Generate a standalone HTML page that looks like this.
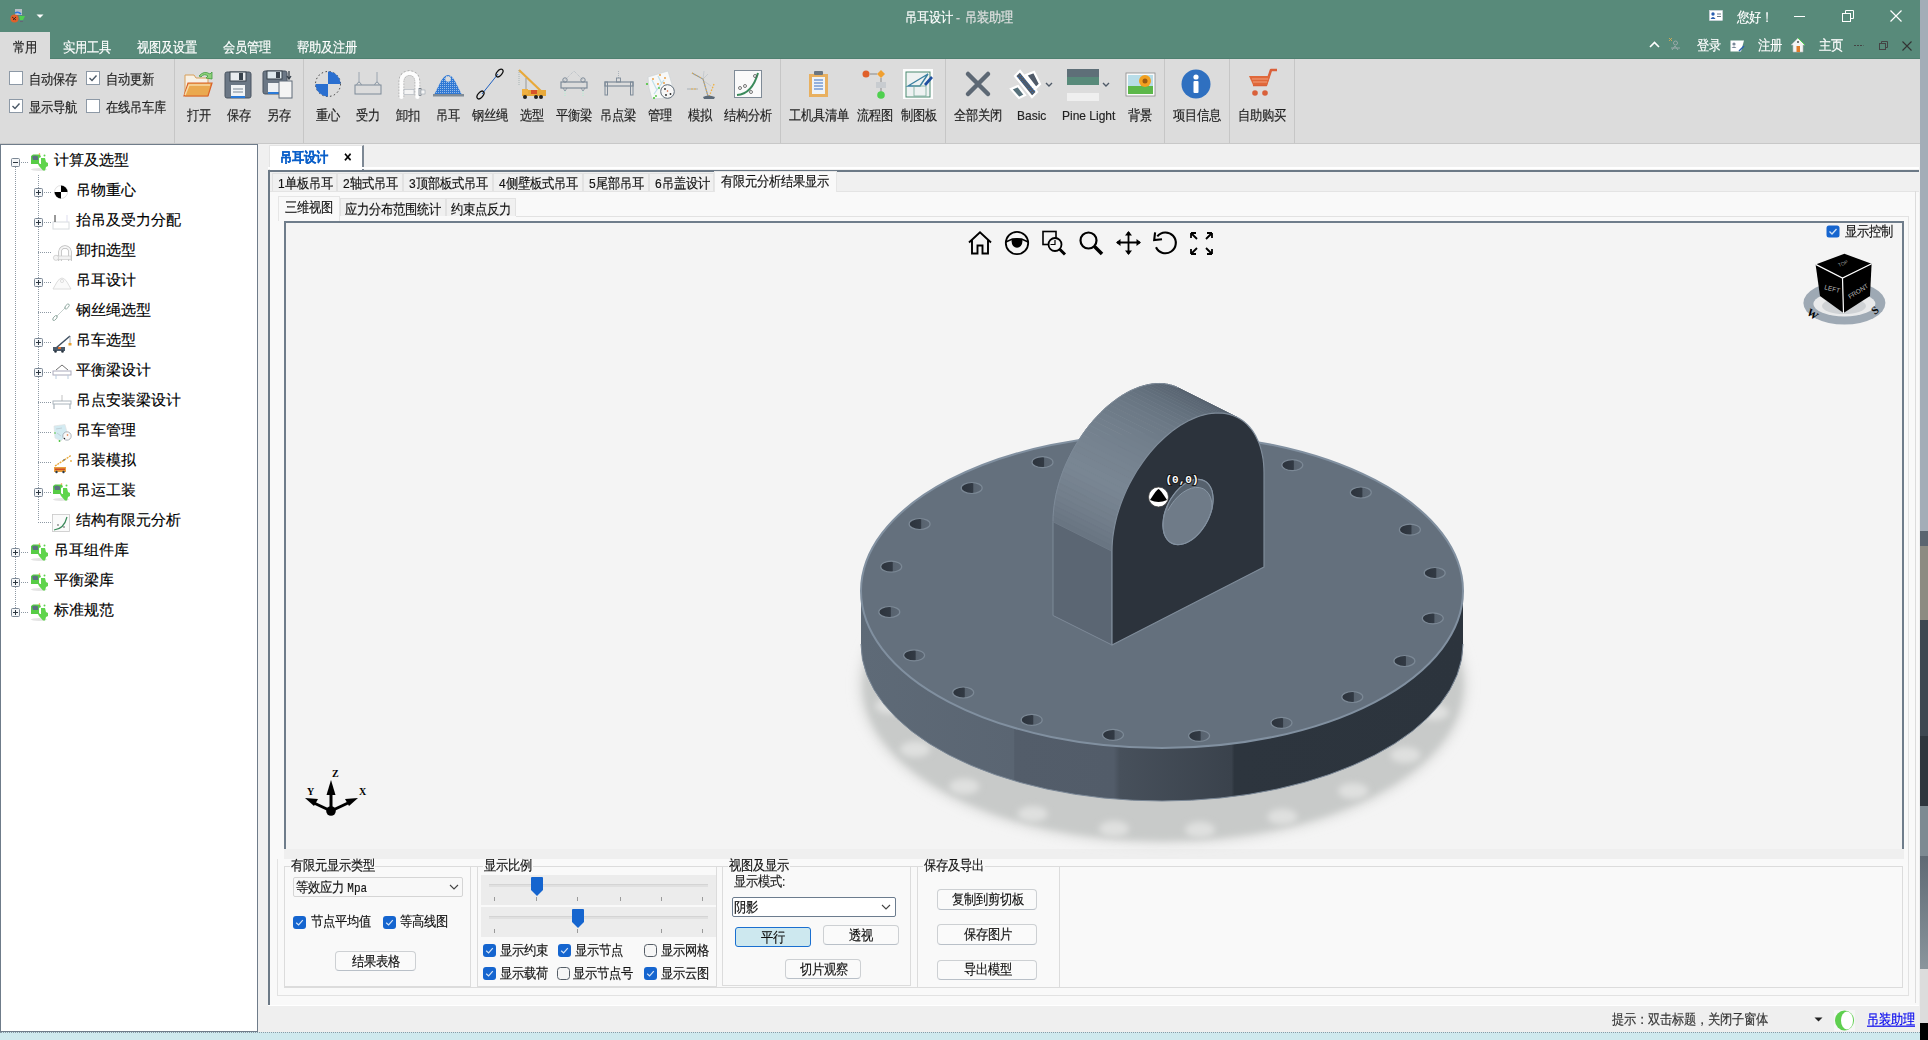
<!DOCTYPE html><html><head><meta charset="utf-8"><style>
*{margin:0;padding:0;box-sizing:border-box}
html,body{width:1928px;height:1040px;overflow:hidden;background:#f0f0f0;font-family:"Liberation Sans",sans-serif;font-size:12px}
.t{position:absolute;white-space:nowrap;line-height:1;transform-origin:50% 55%;-webkit-text-stroke:0.15px currentColor}
.s{transform:scaleY(1.14)}
.r{position:absolute}
svg{position:absolute;overflow:visible}
</style></head><body><div class="r" style="left:1920px;top:0px;width:8px;height:1040px;background:linear-gradient(to bottom,#a3adb7 0,#a3adb7 531px,#5a6570 531px,#5a6570 546px,#8c8b82 546px,#8c8b82 620px,#3f4852 620px,#3f4852 736px,#2f363e 736px,#2f363e 806px,#7d8a92 806px,#7d8a92 856px,#5f6a74 856px,#8a959c 969px,#dcdcdc 969px,#dcdcdc 1023px,#000 1023px,#000 1040px)"></div>
<div class="r" style="left:0px;top:0px;width:1920px;height:59px;background:#588a7a"></div>
<div class="r" style="left:0px;top:58px;width:1920px;height:1px;background:#4f8070"></div>
<div class="r" style="left:0px;top:32px;width:50px;height:27px;background:#dcdcdc"></div>
<div class="t s" style="left:13px;top:42px;font-size:12px;color:#222;">常用</div>
<div class="t s" style="left:63px;top:42px;font-size:12px;color:#fff;">实用工具</div>
<div class="t s" style="left:137px;top:42px;font-size:12px;color:#fff;">视图及设置</div>
<div class="t s" style="left:223px;top:42px;font-size:12px;color:#fff;">会员管理</div>
<div class="t s" style="left:297px;top:42px;font-size:12px;color:#fff;">帮助及注册</div>
<div class="t s" style="left:905px;top:12px;font-size:12px;color:#fff;">吊耳设计</div>
<div class="t s" style="left:956px;top:12px;font-size:12px;color:#ddd;">-</div>
<div class="t s" style="left:965px;top:12px;font-size:12px;color:#e2e2e2;">吊装助理</div>
<div class="t s" style="left:1737px;top:12px;font-size:12px;color:#fff;">您好！</div>
<div class="t s" style="left:1697px;top:40px;font-size:12px;color:#fff;">登录</div>
<div class="t s" style="left:1758px;top:40px;font-size:12px;color:#fff;">注册</div>
<div class="t s" style="left:1819px;top:40px;font-size:12px;color:#fff;">主页</div>
<div class="r" style="left:0px;top:59px;width:1920px;height:84px;background:#dcdcdc"></div>
<div class="r" style="left:0px;top:143px;width:1920px;height:1px;background:#c8c8c8"></div>
<div class="r" style="left:0px;top:144px;width:258px;height:888px;background:#fff;border:1px solid #6f7c8a"></div>
<div class="r" style="left:269px;top:145px;width:95px;height:25px;background:#fff;border-top:1px solid #e4e4e4;border-left:1px solid #e4e4e4;border-right:2px solid #7d8894"></div>
<div class="t s" style="left:280px;top:152px;font-size:12px;color:#0a5fc9;font-weight:bold">吊耳设计</div>
<div class="t s" style="left:344px;top:150px;font-size:13px;color:#000;font-weight:bold">×</div>
<div class="r" style="left:268px;top:170px;width:1651px;height:835px;background:#f9f9f9;border-top:2px solid #6c7986;border-left:2px solid #6c7986"></div>
<div class="r" style="left:268px;top:1005px;width:1651px;height:1px;background:#fff"></div>
<div class="r" style="left:258px;top:1006px;width:1662px;height:26px;background:#efefef"></div>
<div class="r" style="left:0px;top:1032px;width:1920px;height:8px;background:#cfe9ee;border-top:1px dotted #8a9aa6"></div>
<div class="r" style="left:284px;top:221px;width:1620px;height:628px;background:#f4f4f4;border-top:2px solid #6f7d8b;border-left:2px solid #6f7d8b;border-right:2px solid #6f7d8b"></div>
<div class="r" style="left:284px;top:849px;width:1620px;height:10px;background:#efefef"></div>
<svg style="left:0;top:0" width="0" height="0"><defs><pattern id="dots" width="2" height="2" patternUnits="userSpaceOnUse"><rect width="1" height="1" fill="#fff"/></pattern></defs></svg>
<div class="r" style="left:174px;top:59px;width:1px;height:84px;background:#c6c6c6"></div>
<div class="r" style="left:303px;top:59px;width:1px;height:84px;background:#c6c6c6"></div>
<div class="r" style="left:780px;top:59px;width:1px;height:84px;background:#c6c6c6"></div>
<div class="r" style="left:945px;top:59px;width:1px;height:84px;background:#c6c6c6"></div>
<div class="r" style="left:1164px;top:59px;width:1px;height:84px;background:#c6c6c6"></div>
<div class="r" style="left:1229px;top:59px;width:1px;height:84px;background:#c6c6c6"></div>
<div class="r" style="left:1294px;top:59px;width:1px;height:84px;background:#c6c6c6"></div>
<div class="r" style="left:9px;top:71px;width:14px;height:14px;background:#fff;border:1px solid #8d99a6"></div>
<div class="t s" style="left:29px;top:74px;font-size:12px;color:#222;">自动保存</div>
<div class="r" style="left:86px;top:71px;width:14px;height:14px;background:#fff;border:1px solid #8d99a6"></div>
<svg style="left:86px;top:71px" width="14" height="14"><path d="M3.5,7 L6,9.5 L10.5,4.5" fill="none" stroke="#4a5866" stroke-width="1.4"/></svg>
<div class="t s" style="left:106px;top:74px;font-size:12px;color:#222;">自动更新</div>
<div class="r" style="left:9px;top:99px;width:14px;height:14px;background:#fff;border:1px solid #8d99a6"></div>
<svg style="left:9px;top:99px" width="14" height="14"><path d="M3.5,7 L6,9.5 L10.5,4.5" fill="none" stroke="#4a5866" stroke-width="1.4"/></svg>
<div class="t s" style="left:29px;top:102px;font-size:12px;color:#222;">显示导航</div>
<div class="r" style="left:86px;top:99px;width:14px;height:14px;background:#fff;border:1px solid #8d99a6"></div>
<div class="t s" style="left:106px;top:102px;font-size:12px;color:#222;">在线吊车库</div>
<svg style="left:182px;top:68px" width="32" height="32" viewBox="0 0 32 32"><path d="M3,7 L12,7 L14,10 L26,10 L26,28 L3,28 Z" fill="#f7f1e6" stroke="#d9a05a" stroke-width="1"/><path d="M2,28 L6,15 L30,15 L26,28 Z" fill="#eaa94f" stroke="#d9622a" stroke-width="1.2"/><path d="M3,27 L7,17 L28,17" fill="none" stroke="#f6d9a6" stroke-width="1.5"/><path d="M17,8 Q22,2 28,6 L30,4 L30,11 L24,10 L26,8 Q22,5 19,9 Z" fill="#8fd07a" stroke="#3f9a3f" stroke-width="0.8"/></svg>
<div class="t s" style="left:187px;top:110px;font-size:12px;color:#222;">打开</div>
<svg style="left:222px;top:68px" width="32" height="32" viewBox="0 0 32 32"><rect x="3" y="4" width="26" height="26" rx="2" fill="#6b7785" stroke="#4a5561" stroke-width="1"/><rect x="8" y="4" width="16" height="9" fill="#e9ecef" stroke="#38424c" stroke-width="1"/><rect x="17" y="5" width="4" height="7" fill="#38424c"/><rect x="9" y="17" width="14" height="13" fill="#f2f4f6"/><path d="M11,21 H21 M11,24 H21" stroke="#7a8896" stroke-width="1"/><rect x="9" y="28" width="14" height="2" fill="#2a7ad8"/></svg>
<div class="t s" style="left:227px;top:110px;font-size:12px;color:#222;">保存</div>
<svg style="left:262px;top:68px" width="32" height="32" viewBox="0 0 32 32"><rect x="1" y="3" width="24" height="23" rx="2" fill="#6b7785" stroke="#4a5561" stroke-width="1"/><rect x="5" y="3" width="15" height="8" fill="#dfe9ee" stroke="#38424c" stroke-width="1"/><rect x="14" y="4" width="4" height="6" fill="#38424c"/><rect x="6" y="15" width="12" height="11" fill="#eef1f4"/><rect x="6" y="24" width="12" height="2" fill="#2a7ad8"/><rect x="17" y="13" width="13" height="17" fill="#f4f4f4" stroke="#5f6b78" stroke-width="1"/><path d="M27,3 V10 M25,8 L27,11 L29,8" fill="none" stroke="#38424c" stroke-width="1.3"/></svg>
<div class="t s" style="left:267px;top:110px;font-size:12px;color:#222;">另存</div>
<svg style="left:312px;top:68px" width="32" height="32" viewBox="0 0 32 32"><circle cx="16" cy="16" r="12.5" fill="none" stroke="#333" stroke-width="1" stroke-dasharray="1.5 2.5"/><path d="M16,16 L16,3.5 A12.5,12.5 0 0 1 28.5,16 Z" fill="#2a6fd0"/><path d="M16,16 L16,28.5 A12.5,12.5 0 0 1 3.5,16 Z" fill="#2a6fd0"/></svg>
<div class="t s" style="left:316px;top:110px;font-size:12px;color:#222;">重心</div>
<svg style="left:352px;top:68px" width="32" height="32" viewBox="0 0 32 32"><rect x="3" y="17" width="26" height="9" fill="none" stroke="#7d8a98" stroke-width="1"/><path d="M7,4 V14 M25,4 V14" stroke="#8a97a4" stroke-width="0.8"/><path d="M4.5,17 Q7,11 9.5,17 M22.5,17 Q25,11 27.5,17" fill="none" stroke="#8a97a4" stroke-width="1"/></svg>
<div class="t s" style="left:356px;top:110px;font-size:12px;color:#222;">受力</div>
<svg style="left:392px;top:68px" width="32" height="32" viewBox="0 0 32 32"><path d="M9.4,29 V13 A8,8 0 0 1 25.4,13 V29" fill="none" stroke="#777" stroke-width="5.6" stroke-dasharray="1.5 1.5" opacity="0.55"/><path d="M9.4,29 V13 A8,8 0 0 1 25.4,13 V29" fill="none" stroke="#fdfdfd" stroke-width="4.2" stroke-linecap="round"/><rect x="12" y="21.5" width="10" height="5" fill="#f4f4f4" stroke="#a8b0b8" stroke-width="0.6"/><rect x="27" y="20.5" width="2" height="7" fill="#eee" stroke="#4a5866" stroke-width="0.6"/><rect x="29" y="22" width="4" height="4" fill="#f4f4f4" stroke="#8a96a2" stroke-width="0.5"/></svg>
<div class="t s" style="left:396px;top:110px;font-size:12px;color:#222;">卸扣</div>
<svg style="left:432px;top:68px" width="32" height="32" viewBox="0 0 32 32"><path d="M2,27 L9,13 Q16,1 23,13 L30,27 Z" fill="#2f78d4"/><path d="M2,27 L9,13 Q16,1 23,13 L30,27 Z" fill="url(#dots)" opacity="0.5"/><circle cx="16" cy="11" r="2.8" fill="#dcdcdc"/><rect x="1" y="26" width="31" height="2.5" fill="#7f8b97"/></svg>
<div class="t s" style="left:436px;top:110px;font-size:12px;color:#222;">吊耳</div>
<svg style="left:474px;top:68px" width="32" height="32" viewBox="0 0 32 32"><path d="M8,26 L24,6" stroke="#1f60c0" stroke-width="1"/><ellipse cx="25.5" cy="5" rx="2.5" ry="4.5" transform="rotate(40 25.5 5)" fill="none" stroke="#111" stroke-width="1.3"/><ellipse cx="6.5" cy="27" rx="2.5" ry="4.5" transform="rotate(40 6.5 27)" fill="none" stroke="#111" stroke-width="1.3"/></svg>
<div class="t s" style="left:472px;top:110px;font-size:12px;color:#222;">钢丝绳</div>
<svg style="left:516px;top:68px" width="32" height="32" viewBox="0 0 32 32"><path d="M3,2 L26,24" stroke="#e8a93a" stroke-width="2.2"/><path d="M3,2 V18" stroke="#9aa" stroke-width="0.8" stroke-dasharray="1 1"/><path d="M10,10 L10,23" stroke="#999" stroke-width="1"/><rect x="6" y="22" width="24" height="6" fill="#e8a93a"/><rect x="6" y="21" width="6" height="5" fill="#f0b040"/><rect x="15" y="22" width="6" height="4" fill="#d8542a"/><circle cx="9" cy="29" r="2" fill="#222"/><circle cx="20" cy="29" r="2" fill="#222"/><circle cx="25" cy="29" r="2" fill="#222"/></svg>
<div class="t s" style="left:520px;top:110px;font-size:12px;color:#222;">选型</div>
<svg style="left:558px;top:68px" width="32" height="32" viewBox="0 0 32 32"><path d="M6,13 L16,3 L26,13" fill="none" stroke="#9aa6b1" stroke-width="0.6" stroke-dasharray="1 1"/><rect x="3" y="14" width="26" height="6" fill="none" stroke="#7d8a98" stroke-width="1.2"/><circle cx="7" cy="12" r="2.2" fill="none" stroke="#7d8a98" stroke-width="1"/><circle cx="25" cy="12" r="2.2" fill="none" stroke="#7d8a98" stroke-width="1"/><path d="M5,20 L7,23 L9,20 M23,20 L25,23 L27,20" fill="none" stroke="#7d8a98" stroke-width="0.8"/><path d="M7,23 V29 M25,23 V29" stroke="#9fc" stroke-width="0.6" stroke-dasharray="1 1"/></svg>
<div class="t s" style="left:556px;top:110px;font-size:12px;color:#222;">平衡梁</div>
<svg style="left:602px;top:68px" width="32" height="32" viewBox="0 0 32 32"><rect x="3" y="14" width="28" height="4" fill="none" stroke="#7d8a98" stroke-width="1.2"/><rect x="3" y="14" width="2.5" height="13" fill="none" stroke="#7d8a98" stroke-width="1"/><rect x="28.5" y="14" width="2.5" height="13" fill="none" stroke="#7d8a98" stroke-width="1"/><rect x="14.5" y="10" width="4" height="4" fill="none" stroke="#7d8a98" stroke-width="0.9"/><path d="M16.5,3 V10" stroke="#8a97a4" stroke-width="0.6" stroke-dasharray="1 1"/></svg>
<div class="t s" style="left:600px;top:110px;font-size:12px;color:#222;">吊点梁</div>
<svg style="left:644px;top:68px" width="32" height="32" viewBox="0 0 32 32"><path d="M4,9 L24,3 L29,20 L22,30 L8,31 L5,20 Z" fill="#f7f8f8" stroke="#c9d0d4" stroke-width="0.6"/><path d="M8,12 L13,22 M10,26 L20,12 M14,8 L18,16" stroke="#bfe0ea" stroke-width="1.2"/><circle cx="9" cy="11" r="0.9" fill="#e8983a"/><circle cx="16" cy="7" r="0.9" fill="#e8983a"/><circle cx="21" cy="10" r="0.9" fill="#e8983a"/><circle cx="14" cy="16" r="0.9" fill="#e8983a"/><circle cx="20" cy="15" r="0.9" fill="#e8983a"/><circle cx="3" cy="16" r="1.1" fill="#4cc43c"/><circle cx="15" cy="20" r="0.9" fill="#4cc43c"/><circle cx="10" cy="30" r="1.1" fill="#4cc43c"/><circle cx="12" cy="28" r="0.9" fill="#4cc43c"/><circle cx="23.5" cy="23.5" r="6.8" fill="#f6f6f6" stroke="#5f6b77" stroke-width="1"/><circle cx="21" cy="21" r="0.9" fill="#222"/><circle cx="26.5" cy="26" r="0.9" fill="#222"/><circle cx="22" cy="27" r="0.9" fill="#222"/><circle cx="23.5" cy="23" r="0.8" fill="#d05a30"/></svg>
<div class="t s" style="left:648px;top:110px;font-size:12px;color:#222;">管理</div>
<svg style="left:684px;top:68px" width="32" height="32" viewBox="0 0 32 32"><path d="M8,5 L19,11 L24,28" fill="none" stroke="#8796a3" stroke-width="1.1"/><path d="M8,5 L19,11 L24,28" fill="none" stroke="#f0b040" stroke-width="1.1" stroke-dasharray="1 2"/><path d="M30,16 L25,29" fill="none" stroke="#f0b040" stroke-width="1.3" stroke-dasharray="1.5 1.5"/><path d="M19,11 L20,3 M19,11 L24,6 M20,13 L27,18" stroke="#b0b8c0" stroke-width="0.5"/><path d="M3,21 H14" stroke="#9aa4ae" stroke-width="0.8"/><circle cx="8" cy="21" r="0.8" fill="#f0b040"/><circle cx="11" cy="21" r="0.8" fill="#f0b040"/><path d="M19,29 Q24,26 31,29 L30,31 L20,31 Z" fill="#5c6a78"/></svg>
<div class="t s" style="left:688px;top:110px;font-size:12px;color:#222;">模拟</div>
<svg style="left:732px;top:68px" width="32" height="32" viewBox="0 0 32 32"><rect x="2.5" y="2.5" width="27" height="27" fill="#fafafa" stroke="#7f8b97" stroke-width="1"/><path d="M5,27 Q20,26 26,5" fill="none" stroke="#3a8a5a" stroke-width="2"/><circle cx="8" cy="20" r="1.5" fill="none" stroke="#555" stroke-width="0.8"/><circle cx="13" cy="18" r="1.5" fill="none" stroke="#555" stroke-width="0.8"/><circle cx="23" cy="8" r="1.5" fill="none" stroke="#555" stroke-width="0.8"/><circle cx="19" cy="24" r="1.5" fill="none" stroke="#555" stroke-width="0.8"/></svg>
<div class="t s" style="left:724px;top:110px;font-size:12px;color:#222;">结构分析</div>
<svg style="left:802px;top:68px" width="32" height="32" viewBox="0 0 32 32"><rect x="7" y="6" width="19" height="23" fill="#e8b060"/><rect x="10" y="9" width="13" height="17" fill="#eef3f8"/><rect x="12" y="3" width="9" height="4" rx="1" fill="#6a7682"/><path d="M12,12 H21 M12,15 H21 M12,18 H21 M12,21 H21" stroke="#3b6fc0" stroke-width="1"/></svg>
<div class="t s" style="left:789px;top:110px;font-size:12px;color:#222;">工机具清单</div>
<svg style="left:858px;top:68px" width="32" height="32" viewBox="0 0 32 32"><circle cx="8" cy="6" r="3.5" fill="#e0602a"/><path d="M12,6 H19" stroke="#888" stroke-width="1"/><path d="M23,2 L27,6 L23,10 L19,6 Z" fill="#f0a030"/><path d="M23,10 V14" stroke="#888" stroke-width="1"/><rect x="18" y="14" width="10" height="6" fill="#c8ccd0"/><path d="M23,20 V24" stroke="#888" stroke-width="1"/><circle cx="23" cy="27" r="3.8" fill="#4fd04f"/></svg>
<div class="t s" style="left:857px;top:110px;font-size:12px;color:#222;">流程图</div>
<svg style="left:902px;top:68px" width="32" height="32" viewBox="0 0 32 32"><rect x="1" y="1" width="30" height="30" fill="#fdfdfd"/><rect x="4" y="4" width="24" height="25" fill="#eef2f2" stroke="#4a8a70" stroke-width="1"/><path d="M6,18 L26,6 L18,18 Z" fill="none" stroke="#3a80a0" stroke-width="1.4"/><rect x="12" y="18" width="12" height="10" fill="none" stroke="#7a9" stroke-width="0.8"/><path d="M22,16 L29,8 L31,10 L24,18 Z" fill="#1f4fa0"/></svg>
<div class="t s" style="left:901px;top:110px;font-size:12px;color:#222;">制图板</div>
<svg style="left:962px;top:68px" width="32" height="32" viewBox="0 0 32 32"><path d="M6,6 L26,26 M26,6 L6,26" stroke="#5d6874" stroke-width="4.5" stroke-linecap="round"/></svg>
<div class="t s" style="left:954px;top:110px;font-size:12px;color:#222;">全部关闭</div>
<svg style="left:1009px;top:68px" width="32" height="32" viewBox="0 0 32 32"><g stroke="#fff" stroke-width="2.2" stroke-linejoin="miter"><path d="M6,8 L11,3 L28,24 L23,29 Z" fill="#4f5a68"/><path d="M17,7 L25,4 L31,16 L27,20 Z" fill="#4f5a68"/><path d="M2,21 L9,18 L16,27 L10,30 Z" fill="#56707a"/></g><path d="M9,9 L25,26" stroke="#2a7ae0" stroke-width="1" stroke-dasharray="1 2"/><path d="M11,7 L27,24" stroke="#2a7ae0" stroke-width="1" stroke-dasharray="1 2"/></svg>
<svg style="left:1045px;top:82px" width="8" height="6"><path d="M1,1 L4,4 L7,1" fill="none" stroke="#4f5a68" stroke-width="1.4"/></svg>
<div class="t s" style="left:1017px;top:110px;font-size:12px;color:#222;">Basic</div>
<svg style="left:1065px;top:66px" width="36" height="36" viewBox="0 0 36 36"><rect x="2" y="3" width="32" height="16" fill="#588a7a"/><rect x="2" y="3" width="32" height="8" fill="#5e6f78"/><rect x="2" y="27" width="32" height="8" fill="#efefef"/></svg>
<svg style="left:1102px;top:82px" width="8" height="6"><path d="M1,1 L4,4 L7,1" fill="none" stroke="#4f5a68" stroke-width="1.4"/></svg>
<div class="t s" style="left:1062px;top:110px;font-size:12px;color:#222;">Pine Light</div>
<svg style="left:1124px;top:68px" width="32" height="32" viewBox="0 0 32 32"><rect x="2" y="5" width="29" height="23" fill="#fafafa" stroke="#8a8a8a" stroke-width="0.8"/><rect x="4" y="7" width="25" height="19" fill="#b8dde8"/><rect x="4" y="18" width="25" height="8" fill="#5cb84a"/><circle cx="21" cy="13" r="6" fill="#f2a020"/><circle cx="21" cy="13" r="2.5" fill="#9a5a10"/></svg>
<div class="t s" style="left:1128px;top:110px;font-size:12px;color:#222;">背景</div>
<svg style="left:1180px;top:68px" width="32" height="32" viewBox="0 0 32 32"><circle cx="16" cy="16" r="14.5" fill="#2f70c0"/><circle cx="16" cy="9" r="2.6" fill="#fff"/><rect x="13.5" y="13" width="5" height="12" rx="1" fill="#fff"/></svg>
<div class="t s" style="left:1173px;top:110px;font-size:12px;color:#222;">项目信息</div>
<svg style="left:1246px;top:68px" width="32" height="32" viewBox="0 0 32 32"><path d="M31,2 H25 L20,17 H7" fill="none" stroke="#d9603a" stroke-width="2.5" stroke-linejoin="round"/><path d="M3,8 H24 L21,17 H7 Z" fill="#e0683a"/><path d="M6,11 H22 M7,14 H21" stroke="#f6b090" stroke-width="0.8"/><circle cx="9" cy="25" r="2.8" fill="#d9603a"/><circle cx="19" cy="25" r="2.8" fill="#d9603a"/></svg>
<div class="t s" style="left:1238px;top:110px;font-size:12px;color:#222;">自助购买</div>
<svg style="left:10px;top:8px" width="16" height="16" viewBox="0 0 16 16"><rect x="5" y="1" width="7" height="6" fill="#b8bec6"/><path d="M5,5 Q8,3 11,6" stroke="#2a78e0" stroke-width="1.6" fill="none"/><circle cx="4.5" cy="10.5" r="4" fill="#e0602a"/><path d="M2,9 L6,12 M3,12 L6,9" stroke="#222" stroke-width="0.8"/><path d="M9,8 L15,8 L13,12 L10,12 Z" fill="#4fd04f"/><rect x="10" y="13" width="3" height="1" fill="#667"/></svg>
<svg style="left:36px;top:14px" width="8" height="5" viewBox="0 0 8 5"><path d="M0.5,0.5 L7.5,0.5 L4,4 Z" fill="#fff"/></svg>
<svg style="left:1709px;top:10px" width="15" height="12" viewBox="0 0 15 12"><rect x="0.5" y="0.5" width="13" height="10" fill="#fff" stroke="#dde" stroke-width="0.5"/><circle cx="4" cy="4" r="1.7" fill="#2a5fb0"/><path d="M1.5,9 Q4,5 6.5,9 Z" fill="#2a5fb0"/><path d="M8,4 H12 M8,6.5 H12" stroke="#6a7888" stroke-width="1"/></svg>
<svg style="left:1794px;top:10px" width="12" height="12" viewBox="0 0 12 12"><path d="M0,6.5 H11" stroke="#fff" stroke-width="1"/></svg>
<svg style="left:1842px;top:10px" width="12" height="12" viewBox="0 0 12 12"><rect x="0.5" y="3.5" width="8" height="8" fill="none" stroke="#fff" stroke-width="1"/><path d="M3.5,3.5 V0.5 H11.5 V8.5 H8.5" fill="none" stroke="#fff" stroke-width="1"/></svg>
<svg style="left:1890px;top:10px" width="12" height="12" viewBox="0 0 12 12"><path d="M0.5,0.5 L11.5,11.5 M11.5,0.5 L0.5,11.5" stroke="#fff" stroke-width="1.2"/></svg>
<svg style="left:1649px;top:40px" width="12" height="9" viewBox="0 0 12 9"><path d="M1,7 L5.5,2.5 L10,7" fill="none" stroke="#fff" stroke-width="1.6"/></svg>
<svg style="left:1668px;top:37px" width="15" height="15" viewBox="0 0 15 15"><path d="M1,1 L4,4 M4,1 L1,4" stroke="#e0b050" stroke-width="0.8"/><circle cx="7.5" cy="6" r="2" fill="none" stroke="#9aa" stroke-width="1"/><path d="M4,13 L7,9 L10,13 M3,11 H12" stroke="#9aa" stroke-width="1" fill="none"/></svg>
<svg style="left:1730px;top:40px" width="16" height="13" viewBox="0 0 16 13"><path d="M0.5,0.5 H14 L11,11.5 H0.5 Z" fill="#fff"/><circle cx="4" cy="4" r="1.6" fill="#7a8898"/><path d="M1.5,8 Q4,5 6.5,8 Z" fill="#7a8898"/><path d="M9,11 L14,6" stroke="#2a5fb0" stroke-width="1.5"/></svg>
<svg style="left:1790px;top:37px" width="16" height="16" viewBox="0 0 16 16"><path d="M8,1 L15,8 H13 V15 H3 V8 H1 Z" fill="#f4f4f4" stroke="#bbb" stroke-width="0.6"/><path d="M8,1 L15,8" stroke="#4fd04f" stroke-width="1"/><rect x="6.5" y="9" width="3.5" height="6" fill="#e07a2a"/><rect x="7" y="4" width="2" height="2" fill="#777"/></svg>
<svg style="left:1854px;top:44px" width="10" height="3" viewBox="0 0 10 3"><path d="M0,1.5 H9.5" stroke="#444" stroke-width="1" stroke-dasharray="2 1"/></svg>
<svg style="left:1879px;top:41px" width="9" height="9" viewBox="0 0 9 9"><rect x="0.5" y="2.5" width="6" height="6" fill="none" stroke="#444" stroke-width="1"/><path d="M2.5,2.5 V0.5 H8.5 V6.5 H6.5" fill="none" stroke="#444" stroke-width="1"/></svg>
<svg style="left:1902px;top:41px" width="10" height="10" viewBox="0 0 10 10"><path d="M0.5,0.5 L9.5,9.5 M9.5,0.5 L0.5,9.5" stroke="#333" stroke-width="1.1"/></svg>
<svg style="left:15px;top:167px" width="1" height="443" viewBox="0 0 1 443"><path d="M0.5,0 V443" stroke="#8e99a4" stroke-width="1" stroke-dasharray="1 1"/></svg>
<svg style="left:38px;top:175px" width="1" height="345" viewBox="0 0 1 345"><path d="M0.5,0 V345" stroke="#8e99a4" stroke-width="1" stroke-dasharray="1 1"/></svg>
<svg style="left:15px;top:162px" width="14" height="1" viewBox="0 0 14 1"><path d="M0,0.5 H14" stroke="#8e99a4" stroke-width="1" stroke-dasharray="1 1"/></svg>
<svg style="left:11px;top:158px" width="9" height="9" viewBox="0 0 9 9"><rect x="0.5" y="0.5" width="8" height="8" rx="1" fill="#f4f6f8" stroke="#7b8794" stroke-width="1"/><path d="M2,4.5 H7" stroke="#2b3640" stroke-width="1"/></svg>
<svg style="left:30px;top:153px" width="18" height="18" viewBox="0 0 18 18"><ellipse cx="9" cy="16.5" rx="8" ry="1.4" fill="#d8d8d8" opacity="0.7"/><path d="M1,3 L3,1.5 L10,1.5 L11,4 L9,5 L9,10 L10,11 L1,11 Z" fill="#57cc45"/><path d="M2,3.5 L5,2.5 L8,3.5 L8,7 L3,7 Z" fill="#5a7280"/><path d="M11,5 L15,5 L16,9 L18,10 L18,13 L16,14 L15,17.5 L13,17.5 L9,13 L8,11 L11,11 Z" fill="#5fd44c"/><circle cx="14.5" cy="2.5" r="1" fill="#5fd44c"/><circle cx="9.5" cy="1" r="0.8" fill="#f0a040"/></svg>
<div class="t" style="left:54px;top:152px;font-size:15px;color:#000;">计算及选型</div>
<svg style="left:38px;top:192px" width="14" height="1" viewBox="0 0 14 1"><path d="M0,0.5 H14" stroke="#8e99a4" stroke-width="1" stroke-dasharray="1 1"/></svg>
<svg style="left:34px;top:188px" width="9" height="9" viewBox="0 0 9 9"><rect x="0.5" y="0.5" width="8" height="8" rx="1" fill="#f4f6f8" stroke="#7b8794" stroke-width="1"/><path d="M2,4.5 H7" stroke="#2b3640" stroke-width="1"/><path d="M4.5,2 V7" stroke="#2b3640" stroke-width="1"/></svg>
<svg style="left:53px;top:184px" width="20" height="18" viewBox="0 0 20 18"><circle cx="8" cy="8" r="6.5" fill="#fff" stroke="#ccc" stroke-width="0.6"/><path d="M8,8 V1.5 A6.5,6.5 0 0 1 14.5,8 Z" fill="#000"/><path d="M8,8 V14.5 A6.5,6.5 0 0 1 1.5,8 Z" fill="#000"/></svg>
<div class="t" style="left:76px;top:182px;font-size:15px;color:#000;">吊物重心</div>
<svg style="left:38px;top:222px" width="14" height="1" viewBox="0 0 14 1"><path d="M0,0.5 H14" stroke="#8e99a4" stroke-width="1" stroke-dasharray="1 1"/></svg>
<svg style="left:34px;top:218px" width="9" height="9" viewBox="0 0 9 9"><rect x="0.5" y="0.5" width="8" height="8" rx="1" fill="#f4f6f8" stroke="#7b8794" stroke-width="1"/><path d="M2,4.5 H7" stroke="#2b3640" stroke-width="1"/><path d="M4.5,2 V7" stroke="#2b3640" stroke-width="1"/></svg>
<svg style="left:52px;top:214px" width="20" height="18" viewBox="0 0 20 18"><rect x="1" y="8" width="16" height="7" fill="none" stroke="#d8dcdf" stroke-width="1"/><path d="M3,1 V8" stroke="#333" stroke-width="1"/><path d="M15,1 V8" stroke="#dde" stroke-width="1"/></svg>
<div class="t" style="left:76px;top:212px;font-size:15px;color:#000;">抬吊及受力分配</div>
<svg style="left:38px;top:252px" width="14" height="1" viewBox="0 0 14 1"><path d="M0,0.5 H14" stroke="#8e99a4" stroke-width="1" stroke-dasharray="1 1"/></svg>
<svg style="left:52px;top:244px" width="20" height="18" viewBox="0 0 20 18"><path d="M8,17 V8 A5,5 0 0 1 18,8 V17" fill="none" stroke="#b8b8b8" stroke-width="3.6"/><path d="M8,17 V8 A5,5 0 0 1 18,8 V17" fill="none" stroke="#f6f6f6" stroke-width="2.2"/><rect x="4" y="12" width="15" height="3.5" fill="#f2f2f2" stroke="#c4c4c4" stroke-width="0.6"/><circle cx="4" cy="13.8" r="2.6" fill="#f4f4f4" stroke="#c0c0c0" stroke-width="0.6"/></svg>
<div class="t" style="left:76px;top:242px;font-size:15px;color:#000;">卸扣选型</div>
<svg style="left:38px;top:282px" width="14" height="1" viewBox="0 0 14 1"><path d="M0,0.5 H14" stroke="#8e99a4" stroke-width="1" stroke-dasharray="1 1"/></svg>
<svg style="left:34px;top:278px" width="9" height="9" viewBox="0 0 9 9"><rect x="0.5" y="0.5" width="8" height="8" rx="1" fill="#f4f6f8" stroke="#7b8794" stroke-width="1"/><path d="M2,4.5 H7" stroke="#2b3640" stroke-width="1"/><path d="M4.5,2 V7" stroke="#2b3640" stroke-width="1"/></svg>
<svg style="left:52px;top:274px" width="20" height="18" viewBox="0 0 20 18"><path d="M1,15 L5,8 Q10,0 15,8 L19,15 Z" fill="#fafafa" stroke="#d6d6d6" stroke-width="0.8"/><circle cx="10" cy="7" r="1.6" fill="none" stroke="#ccc" stroke-width="0.6"/></svg>
<div class="t" style="left:76px;top:272px;font-size:15px;color:#000;">吊耳设计</div>
<svg style="left:38px;top:312px" width="14" height="1" viewBox="0 0 14 1"><path d="M0,0.5 H14" stroke="#8e99a4" stroke-width="1" stroke-dasharray="1 1"/></svg>
<svg style="left:52px;top:304px" width="20" height="18" viewBox="0 0 20 18"><path d="M4,13 L14,3" stroke="#b8c4c0" stroke-width="0.8"/><ellipse cx="15" cy="2.5" rx="1.5" ry="3" transform="rotate(40 15 2.5)" fill="none" stroke="#8fa8a0" stroke-width="0.9"/><ellipse cx="3" cy="14" rx="1.5" ry="3" transform="rotate(40 3 14)" fill="none" stroke="#8fa8a0" stroke-width="0.9"/></svg>
<div class="t" style="left:76px;top:302px;font-size:15px;color:#000;">钢丝绳选型</div>
<svg style="left:38px;top:342px" width="14" height="1" viewBox="0 0 14 1"><path d="M0,0.5 H14" stroke="#8e99a4" stroke-width="1" stroke-dasharray="1 1"/></svg>
<svg style="left:34px;top:338px" width="9" height="9" viewBox="0 0 9 9"><rect x="0.5" y="0.5" width="8" height="8" rx="1" fill="#f4f6f8" stroke="#7b8794" stroke-width="1"/><path d="M2,4.5 H7" stroke="#2b3640" stroke-width="1"/><path d="M4.5,2 V7" stroke="#2b3640" stroke-width="1"/></svg>
<svg style="left:52px;top:334px" width="20" height="18" viewBox="0 0 20 18"><path d="M4,14 L18,2" stroke="#3f4f60" stroke-width="1.5"/><path d="M18,2 V9" stroke="#8a949e" stroke-width="0.7"/><rect x="16.5" y="9" width="3" height="2.5" fill="#e8a030"/><rect x="1" y="13" width="12" height="4" fill="#4a5a6a"/><rect x="6" y="13" width="3" height="2" fill="#e07030"/><circle cx="3.5" cy="17.5" r="1.3" fill="#2a3540"/><circle cx="10.5" cy="17.5" r="1.3" fill="#2a3540"/></svg>
<div class="t" style="left:76px;top:332px;font-size:15px;color:#000;">吊车选型</div>
<svg style="left:38px;top:372px" width="14" height="1" viewBox="0 0 14 1"><path d="M0,0.5 H14" stroke="#8e99a4" stroke-width="1" stroke-dasharray="1 1"/></svg>
<svg style="left:34px;top:368px" width="9" height="9" viewBox="0 0 9 9"><rect x="0.5" y="0.5" width="8" height="8" rx="1" fill="#f4f6f8" stroke="#7b8794" stroke-width="1"/><path d="M2,4.5 H7" stroke="#2b3640" stroke-width="1"/><path d="M4.5,2 V7" stroke="#2b3640" stroke-width="1"/></svg>
<svg style="left:52px;top:364px" width="20" height="18" viewBox="0 0 20 18"><path d="M4,6 L10,1 L16,6" fill="none" stroke="#333" stroke-width="0.7"/><rect x="1" y="7" width="18" height="4" fill="none" stroke="#aab" stroke-width="1"/><path d="M4,11 V15 M16,11 V15" stroke="#bcd" stroke-width="1"/></svg>
<div class="t" style="left:76px;top:362px;font-size:15px;color:#000;">平衡梁设计</div>
<svg style="left:38px;top:402px" width="14" height="1" viewBox="0 0 14 1"><path d="M0,0.5 H14" stroke="#8e99a4" stroke-width="1" stroke-dasharray="1 1"/></svg>
<svg style="left:52px;top:394px" width="20" height="18" viewBox="0 0 20 18"><rect x="1" y="7" width="18" height="3" fill="none" stroke="#aab4bc" stroke-width="1"/><path d="M2,10 V15 M18,10 V15" stroke="#aab4bc" stroke-width="1.2"/><path d="M10,1 V7" stroke="#999" stroke-width="0.6"/></svg>
<div class="t" style="left:76px;top:392px;font-size:15px;color:#000;">吊点安装梁设计</div>
<svg style="left:38px;top:432px" width="14" height="1" viewBox="0 0 14 1"><path d="M0,0.5 H14" stroke="#8e99a4" stroke-width="1" stroke-dasharray="1 1"/></svg>
<svg style="left:52px;top:424px" width="20" height="18" viewBox="0 0 20 18"><path d="M2,2 L13,0.5 L15.5,10 L9,17 L3,14 Z" fill="#d3ebf2" stroke="#e2e2e2" stroke-width="0.7"/><path d="M4,5 L10,4 M5,9 L9,12" stroke="#b8c4cc" stroke-width="0.7"/><circle cx="3" cy="9" r="0.8" fill="#4cc43c"/><circle cx="7.5" cy="17" r="0.9" fill="#4cc43c"/><circle cx="15" cy="12" r="4.2" fill="#f8f8f8" stroke="#8e98a2" stroke-width="0.7"/><circle cx="15.5" cy="11" r="0.8" fill="#e06a2a"/><circle cx="12.5" cy="14.5" r="0.7" fill="#222"/></svg>
<div class="t" style="left:76px;top:422px;font-size:15px;color:#000;">吊车管理</div>
<svg style="left:38px;top:462px" width="14" height="1" viewBox="0 0 14 1"><path d="M0,0.5 H14" stroke="#8e99a4" stroke-width="1" stroke-dasharray="1 1"/></svg>
<svg style="left:52px;top:454px" width="20" height="18" viewBox="0 0 20 18"><path d="M3,12 L19,1.5" stroke="#e8a93a" stroke-width="1.4" stroke-dasharray="2 0.8"/><circle cx="19" cy="7" r="0.9" fill="#e8a93a"/><circle cx="12" cy="6" r="0.8" fill="#3a4a5a"/><rect x="2" y="13" width="12" height="5" fill="#e8a040"/><rect x="3" y="14.5" width="10" height="1.6" fill="#d04a20"/><circle cx="4.5" cy="18" r="1.2" fill="#2a3a4a"/><circle cx="11.5" cy="18" r="1.2" fill="#2a3a4a"/></svg>
<div class="t" style="left:76px;top:452px;font-size:15px;color:#000;">吊装模拟</div>
<svg style="left:38px;top:492px" width="14" height="1" viewBox="0 0 14 1"><path d="M0,0.5 H14" stroke="#8e99a4" stroke-width="1" stroke-dasharray="1 1"/></svg>
<svg style="left:34px;top:488px" width="9" height="9" viewBox="0 0 9 9"><rect x="0.5" y="0.5" width="8" height="8" rx="1" fill="#f4f6f8" stroke="#7b8794" stroke-width="1"/><path d="M2,4.5 H7" stroke="#2b3640" stroke-width="1"/><path d="M4.5,2 V7" stroke="#2b3640" stroke-width="1"/></svg>
<svg style="left:52px;top:483px" width="18" height="18" viewBox="0 0 18 18"><ellipse cx="9" cy="16.5" rx="8" ry="1.4" fill="#d8d8d8" opacity="0.7"/><path d="M1,3 L3,1.5 L10,1.5 L11,4 L9,5 L9,10 L10,11 L1,11 Z" fill="#57cc45"/><path d="M2,3.5 L5,2.5 L8,3.5 L8,7 L3,7 Z" fill="#5a7280"/><path d="M11,5 L15,5 L16,9 L18,10 L18,13 L16,14 L15,17.5 L13,17.5 L9,13 L8,11 L11,11 Z" fill="#5fd44c"/><circle cx="14.5" cy="2.5" r="1" fill="#5fd44c"/><circle cx="9.5" cy="1" r="0.8" fill="#f0a040"/></svg>
<div class="t" style="left:76px;top:482px;font-size:15px;color:#000;">吊运工装</div>
<svg style="left:38px;top:522px" width="14" height="1" viewBox="0 0 14 1"><path d="M0,0.5 H14" stroke="#8e99a4" stroke-width="1" stroke-dasharray="1 1"/></svg>
<svg style="left:52px;top:514px" width="20" height="18" viewBox="0 0 20 18"><rect x="0.5" y="0.5" width="17" height="17" fill="#fafafa" stroke="#c8c8c8" stroke-width="0.8"/><path d="M2,16 Q12,15 15,3" fill="none" stroke="#3a8a5a" stroke-width="1.2"/><circle cx="6" cy="11" r="0.9" fill="#888"/><circle cx="12" cy="13" r="0.9" fill="#888"/></svg>
<div class="t" style="left:76px;top:512px;font-size:15px;color:#000;">结构有限元分析</div>
<svg style="left:15px;top:552px" width="14" height="1" viewBox="0 0 14 1"><path d="M0,0.5 H14" stroke="#8e99a4" stroke-width="1" stroke-dasharray="1 1"/></svg>
<svg style="left:11px;top:548px" width="9" height="9" viewBox="0 0 9 9"><rect x="0.5" y="0.5" width="8" height="8" rx="1" fill="#f4f6f8" stroke="#7b8794" stroke-width="1"/><path d="M2,4.5 H7" stroke="#2b3640" stroke-width="1"/><path d="M4.5,2 V7" stroke="#2b3640" stroke-width="1"/></svg>
<svg style="left:30px;top:543px" width="18" height="18" viewBox="0 0 18 18"><ellipse cx="9" cy="16.5" rx="8" ry="1.4" fill="#d8d8d8" opacity="0.7"/><path d="M1,3 L3,1.5 L10,1.5 L11,4 L9,5 L9,10 L10,11 L1,11 Z" fill="#57cc45"/><path d="M2,3.5 L5,2.5 L8,3.5 L8,7 L3,7 Z" fill="#5a7280"/><path d="M11,5 L15,5 L16,9 L18,10 L18,13 L16,14 L15,17.5 L13,17.5 L9,13 L8,11 L11,11 Z" fill="#5fd44c"/><circle cx="14.5" cy="2.5" r="1" fill="#5fd44c"/><circle cx="9.5" cy="1" r="0.8" fill="#f0a040"/></svg>
<div class="t" style="left:54px;top:542px;font-size:15px;color:#000;">吊耳组件库</div>
<svg style="left:15px;top:582px" width="14" height="1" viewBox="0 0 14 1"><path d="M0,0.5 H14" stroke="#8e99a4" stroke-width="1" stroke-dasharray="1 1"/></svg>
<svg style="left:11px;top:578px" width="9" height="9" viewBox="0 0 9 9"><rect x="0.5" y="0.5" width="8" height="8" rx="1" fill="#f4f6f8" stroke="#7b8794" stroke-width="1"/><path d="M2,4.5 H7" stroke="#2b3640" stroke-width="1"/><path d="M4.5,2 V7" stroke="#2b3640" stroke-width="1"/></svg>
<svg style="left:30px;top:573px" width="18" height="18" viewBox="0 0 18 18"><ellipse cx="9" cy="16.5" rx="8" ry="1.4" fill="#d8d8d8" opacity="0.7"/><path d="M1,3 L3,1.5 L10,1.5 L11,4 L9,5 L9,10 L10,11 L1,11 Z" fill="#57cc45"/><path d="M2,3.5 L5,2.5 L8,3.5 L8,7 L3,7 Z" fill="#5a7280"/><path d="M11,5 L15,5 L16,9 L18,10 L18,13 L16,14 L15,17.5 L13,17.5 L9,13 L8,11 L11,11 Z" fill="#5fd44c"/><circle cx="14.5" cy="2.5" r="1" fill="#5fd44c"/><circle cx="9.5" cy="1" r="0.8" fill="#f0a040"/></svg>
<div class="t" style="left:54px;top:572px;font-size:15px;color:#000;">平衡梁库</div>
<svg style="left:15px;top:612px" width="14" height="1" viewBox="0 0 14 1"><path d="M0,0.5 H14" stroke="#8e99a4" stroke-width="1" stroke-dasharray="1 1"/></svg>
<svg style="left:11px;top:608px" width="9" height="9" viewBox="0 0 9 9"><rect x="0.5" y="0.5" width="8" height="8" rx="1" fill="#f4f6f8" stroke="#7b8794" stroke-width="1"/><path d="M2,4.5 H7" stroke="#2b3640" stroke-width="1"/><path d="M4.5,2 V7" stroke="#2b3640" stroke-width="1"/></svg>
<svg style="left:30px;top:603px" width="18" height="18" viewBox="0 0 18 18"><ellipse cx="9" cy="16.5" rx="8" ry="1.4" fill="#d8d8d8" opacity="0.7"/><path d="M1,3 L3,1.5 L10,1.5 L11,4 L9,5 L9,10 L10,11 L1,11 Z" fill="#57cc45"/><path d="M2,3.5 L5,2.5 L8,3.5 L8,7 L3,7 Z" fill="#5a7280"/><path d="M11,5 L15,5 L16,9 L18,10 L18,13 L16,14 L15,17.5 L13,17.5 L9,13 L8,11 L11,11 Z" fill="#5fd44c"/><circle cx="14.5" cy="2.5" r="1" fill="#5fd44c"/><circle cx="9.5" cy="1" r="0.8" fill="#f0a040"/></svg>
<div class="t" style="left:54px;top:602px;font-size:15px;color:#000;">标准规范</div>
<div class="r" style="left:270px;top:172px;width:1649px;height:20px;background:#f0f0f0"></div>
<div class="r" style="left:272px;top:173px;width:65px;height:18px;background:#f0f0f0;border:1px solid #e2e2e2;border-bottom:none"></div>
<div class="t s" style="left:278px;top:178px;font-size:12px;color:#111;">1单板吊耳</div>
<div class="r" style="left:337px;top:173px;width:66px;height:18px;background:#f0f0f0;border:1px solid #e2e2e2;border-bottom:none"></div>
<div class="t s" style="left:343px;top:178px;font-size:12px;color:#111;">2轴式吊耳</div>
<div class="r" style="left:403px;top:173px;width:90px;height:18px;background:#f0f0f0;border:1px solid #e2e2e2;border-bottom:none"></div>
<div class="t s" style="left:409px;top:178px;font-size:12px;color:#111;">3顶部板式吊耳</div>
<div class="r" style="left:493px;top:173px;width:90px;height:18px;background:#f0f0f0;border:1px solid #e2e2e2;border-bottom:none"></div>
<div class="t s" style="left:499px;top:178px;font-size:12px;color:#111;">4侧壁板式吊耳</div>
<div class="r" style="left:583px;top:173px;width:66px;height:18px;background:#f0f0f0;border:1px solid #e2e2e2;border-bottom:none"></div>
<div class="t s" style="left:589px;top:178px;font-size:12px;color:#111;">5尾部吊耳</div>
<div class="r" style="left:649px;top:173px;width:65px;height:18px;background:#f0f0f0;border:1px solid #e2e2e2;border-bottom:none"></div>
<div class="t s" style="left:655px;top:178px;font-size:12px;color:#111;">6吊盖设计</div>
<div class="r" style="left:714px;top:171px;width:123px;height:21px;background:#f9f9f9;border:1px solid #e6e6e6;border-bottom:none"></div>
<div class="t s" style="left:721px;top:176px;font-size:12px;color:#111;">有限元分析结果显示</div>
<div class="r" style="left:270px;top:191px;width:444px;height:1px;background:#e4e4e4"></div>
<div class="r" style="left:837px;top:191px;width:1082px;height:1px;background:#e4e4e4"></div>
<div class="r" style="left:278px;top:196px;width:62px;height:25px;background:#f9f9f9;border:1px solid #e6e6e6;border-bottom:none"></div>
<div class="t s" style="left:285px;top:202px;font-size:12px;color:#111;">三维视图</div>
<div class="r" style="left:340px;top:198px;width:106px;height:18px;background:#f0f0f0;border:1px solid #e2e2e2;border-bottom:none"></div>
<div class="t s" style="left:345px;top:204px;font-size:12px;color:#111;">应力分布范围统计</div>
<div class="r" style="left:446px;top:198px;width:70px;height:18px;background:#f0f0f0;border:1px solid #e2e2e2;border-bottom:none"></div>
<div class="t s" style="left:451px;top:204px;font-size:12px;color:#111;">约束点反力</div>
<div class="r" style="left:516px;top:216px;width:1393px;height:1px;background:#e2e2e2"></div>
<div class="r" style="left:1915px;top:191px;width:1px;height:812px;background:#dcdcdc"></div>
<div class="r" style="left:1908px;top:216px;width:1px;height:780px;background:#e2e2e2"></div>
<div class="r" style="left:268px;top:167px;width:1651px;height:2px;background:#fff"></div>
<div class="r" style="left:278px;top:216px;width:1px;height:5px;background:#e6e6e6"></div>
<svg style="left:968px;top:231px" width="25" height="24" viewBox="0 0 25 24"><path d="M1,11.5 L12,1.2 L23,11.5 M4,8.5 V22.5 H9.5 V14.5 H14.5 V22.5 H20 V8.5" fill="none" stroke="#000" stroke-width="1.9" stroke-linejoin="miter"/></svg>
<svg style="left:1004px;top:231px" width="26" height="24" viewBox="0 0 26 24"><circle cx="13" cy="12" r="11.2" fill="none" stroke="#000" stroke-width="1.8"/><path d="M1.8,11 Q13,4.5 24.2,11" fill="none" stroke="#000" stroke-width="1.6"/><path d="M7.6,7.6 Q13,6.8 18.4,7.6 V10.5 A5.4,6.2 0 0 1 7.6,10.5 Z" fill="#000"/></svg>
<svg style="left:1041px;top:230px" width="27" height="26" viewBox="0 0 27 26"><rect x="2" y="1.5" width="13" height="13" fill="none" stroke="#000" stroke-width="1.6"/><circle cx="14" cy="14.5" r="6.5" fill="#f4f4f4" stroke="#000" stroke-width="1.8"/><path d="M14,10 V14.5 H9.5" fill="none" stroke="#000" stroke-width="1.2"/><path d="M18.5,19 L24,24.5" stroke="#000" stroke-width="3"/></svg>
<svg style="left:1078px;top:230px" width="27" height="26" viewBox="0 0 27 26"><circle cx="10.5" cy="10.5" r="8" fill="none" stroke="#000" stroke-width="2.2"/><path d="M16.5,16.5 L24,24" stroke="#000" stroke-width="3.5"/></svg>
<svg style="left:1115px;top:230px" width="27" height="26" viewBox="0 0 27 26"><path d="M13.5,2 V24 M2,12.5 H25" stroke="#000" stroke-width="1.8"/><path d="M13.5,1 L10,5.5 H17 Z M13.5,25 L10,20.5 H17 Z M1,12.5 L5.5,9 V16 Z M26,12.5 L21.5,9 V16 Z" fill="#000"/></svg>
<svg style="left:1153px;top:230px" width="26" height="26" viewBox="0 0 26 26"><path d="M4.3,6.35 A10.4,10.4 0 1 1 3.0,17.3" fill="none" stroke="#000" stroke-width="2.1"/><path d="M2.1,2.4 L1.2,10 L9,9.3" fill="none" stroke="#000" stroke-width="2.1" stroke-linejoin="miter"/></svg>
<svg style="left:1189px;top:231px" width="26" height="25" viewBox="0 0 26 25"><g fill="none" stroke="#000" stroke-width="1.8"><path d="M2,2 L8,8 M2,2 H7 M2,2 V7"/><path d="M23,2 L17,8 M23,2 H18 M23,2 V7"/><path d="M2,23 L8,17 M2,23 H7 M2,23 V18"/><path d="M23,23 L17,17 M23,23 H18 M23,23 V18"/></g></svg>
<svg style="left:1826px;top:225px" width="14" height="13" viewBox="0 0 14 13"><rect x="0.5" y="0.5" width="13" height="12" rx="2.5" fill="#1565cf"/><path d="M3.5,6.5 L6,9 L10.5,4" fill="none" stroke="#cfe0f5" stroke-width="1.3"/></svg>
<div class="t s" style="left:1845px;top:226px;font-size:12px;color:#111;">显示控制</div>
<svg style="left:1802px;top:253px" width="86" height="80" viewBox="0 0 86 80"><ellipse cx="42.4" cy="50" rx="41" ry="21.6" fill="#9ea9b4"/><ellipse cx="42.4" cy="51" rx="31" ry="12.5" fill="#e9eaeb"/><ellipse cx="42" cy="53" rx="22" ry="8" fill="#cfd2d5"/><path d="M13.6,11.4 L42.4,0.75 L69.6,10.75 L40.5,25 Z" fill="#000"/><path d="M13.6,11.4 L40.5,25 L41.5,60 L18,43 Z" fill="#000"/><path d="M40.5,25 L69.6,10.75 L68,43 L41.5,60 Z" fill="#000"/><path d="M13.6,11.4 L40.5,25 L69.6,10.75 M40.5,25 L41.5,60" fill="none" stroke="#fff" stroke-width="1.2"/><text x="0" y="0" transform="translate(22,36) rotate(15)" font-family="Liberation Sans" font-size="6.5" fill="#bbb">LEFT</text><text x="0" y="0" transform="translate(48,46) rotate(-32)" font-family="Liberation Sans" font-size="6.5" fill="#bbb">FRONT</text><text x="0" y="0" transform="translate(37,14) rotate(-22)" font-family="Liberation Sans" font-size="5" fill="#999">TOP</text><text x="0" y="0" transform="translate(4,61) rotate(35)" font-family="Liberation Serif" font-size="11" fill="#000" font-weight="bold">W</text><text x="0" y="0" transform="translate(73,62) rotate(-40)" font-family="Liberation Serif" font-size="11" fill="#000" font-weight="bold">S</text></svg>
<svg style="left:305px;top:768px" width="62" height="50" viewBox="0 0 62 50"><path d="M26,12 L21.5,27 H30.5 Z" fill="#000"/><rect x="24.5" y="26" width="3" height="15" fill="#000"/><circle cx="26" cy="43" r="4.8" fill="#000"/><path d="M26,43 L9,35" stroke="#000" stroke-width="3"/><path d="M0,30 L13,31 L9,38 Z" fill="#000"/><path d="M26,43 L43,35" stroke="#000" stroke-width="3"/><path d="M53,30 L40,31 L44,38 Z" fill="#000"/><text x="27" y="9" font-family="Liberation Serif" font-weight="bold" font-size="10" fill="#000">Z</text><text x="2" y="27" font-family="Liberation Serif" font-weight="bold" font-size="10" fill="#000">Y</text><text x="54" y="27" font-family="Liberation Serif" font-weight="bold" font-size="10" fill="#000">X</text></svg>
<div class="r" style="left:277px;top:859px;width:1632px;height:137px;border:1px solid #e2e2e2;border-top:none"></div>
<div class="r" style="left:284px;top:866px;width:1619px;height:122px;border:1px solid #dcdcdc"></div>
<div class="r" style="left:284px;top:866px;width:187px;height:121px;border:1px solid #dcdcdc"></div><div class="r" style="left:290px;top:864px;width:85.2px;height:5px;background:#f9f9f9"></div><div class="t s" style="left:291px;top:860px;font-size:12px;color:#111;">有限元显示类型</div>
<div class="r" style="left:477px;top:866px;width:240px;height:121px;border:1px solid #dcdcdc"></div><div class="r" style="left:483px;top:864px;width:50.4px;height:5px;background:#f9f9f9"></div><div class="t s" style="left:484px;top:860px;font-size:12px;color:#111;">显示比例</div>
<div class="r" style="left:722px;top:866px;width:189px;height:120px;border:1px solid #dcdcdc"></div><div class="r" style="left:728px;top:864px;width:62.0px;height:5px;background:#f9f9f9"></div><div class="t s" style="left:729px;top:860px;font-size:12px;color:#111;">视图及显示</div>
<div class="r" style="left:917px;top:866px;width:143px;height:122px;border:1px solid #dcdcdc"></div><div class="r" style="left:923px;top:864px;width:62.0px;height:5px;background:#f9f9f9"></div><div class="t s" style="left:924px;top:860px;font-size:12px;color:#111;">保存及导出</div>
<div class="r" style="left:293px;top:877px;width:170px;height:20px;background:#f8f8f8;border:1px solid #d5d5d5;border-radius:2px"></div>
<div class="t s" style="left:296px;top:882px;font-size:12px;color:#111;">等效应力 <span style="font-family:Liberation Mono;font-size:11px">Mpa</span></div>
<svg style="left:449px;top:884px" width="10" height="6" viewBox="0 0 10 6"><path d="M1,1 L5,5 L9,1" fill="none" stroke="#444" stroke-width="1.1"/></svg>
<svg style="left:293px;top:916px" width="13" height="13" viewBox="0 0 13 13"><rect x="0" y="0" width="13" height="13" rx="3" fill="#1565cf"/><path d="M3.2,6.8 L5.6,9 L9.8,4.2" fill="none" stroke="#d5e4f7" stroke-width="1.2"/></svg>
<div class="t s" style="left:311px;top:916px;font-size:12px;color:#111;">节点平均值</div>
<svg style="left:383px;top:916px" width="13" height="13" viewBox="0 0 13 13"><rect x="0" y="0" width="13" height="13" rx="3" fill="#1565cf"/><path d="M3.2,6.8 L5.6,9 L9.8,4.2" fill="none" stroke="#d5e4f7" stroke-width="1.2"/></svg>
<div class="t s" style="left:400px;top:916px;font-size:12px;color:#111;">等高线图</div>
<div class="r" style="left:335px;top:951px;width:81px;height:20px;background:#fafafa;border:1px solid #cdd0d3;border-bottom-color:#b9c0c8;border-radius:4px"></div><div class="t s" style="left:352px;top:956px;font-size:12px;color:#111;">结果表格</div>
<div class="r" style="left:481px;top:875px;width:235px;height:30px;background:#ececec"></div>
<div class="r" style="left:489px;top:884px;width:219px;height:3px;background:#e0e0e0;border-top:1px solid #d4d4d4"></div>
<div class="r" style="left:494px;top:897px;width:1px;height:4px;background:#9a9a9a"></div>
<div class="r" style="left:536px;top:897px;width:1px;height:4px;background:#9a9a9a"></div>
<div class="r" style="left:577px;top:897px;width:1px;height:4px;background:#9a9a9a"></div>
<div class="r" style="left:620px;top:897px;width:1px;height:4px;background:#9a9a9a"></div>
<div class="r" style="left:661px;top:897px;width:1px;height:4px;background:#9a9a9a"></div>
<div class="r" style="left:702px;top:897px;width:1px;height:4px;background:#9a9a9a"></div>
<svg style="left:531px;top:877px" width="12" height="20" viewBox="0 0 12 20"><path d="M0,1 Q0,0 1,0 H11 Q12,0 12,1 V13 L6,19 L0,13 Z" fill="#1565cf"/></svg>
<div class="r" style="left:481px;top:907px;width:235px;height:30px;background:#ececec"></div>
<div class="r" style="left:489px;top:916px;width:219px;height:3px;background:#e0e0e0;border-top:1px solid #d4d4d4"></div>
<div class="r" style="left:494px;top:929px;width:1px;height:4px;background:#9a9a9a"></div>
<div class="r" style="left:577px;top:929px;width:1px;height:4px;background:#9a9a9a"></div>
<div class="r" style="left:661px;top:929px;width:1px;height:4px;background:#9a9a9a"></div>
<div class="r" style="left:702px;top:929px;width:1px;height:4px;background:#9a9a9a"></div>
<svg style="left:572px;top:909px" width="12" height="20" viewBox="0 0 12 20"><path d="M0,1 Q0,0 1,0 H11 Q12,0 12,1 V13 L6,19 L0,13 Z" fill="#1565cf"/></svg>
<svg style="left:483px;top:944px" width="13" height="13" viewBox="0 0 13 13"><rect x="0" y="0" width="13" height="13" rx="3" fill="#1565cf"/><path d="M3.2,6.8 L5.6,9 L9.8,4.2" fill="none" stroke="#d5e4f7" stroke-width="1.2"/></svg>
<div class="t s" style="left:500px;top:945px;font-size:12px;color:#111;">显示约束</div>
<svg style="left:558px;top:944px" width="13" height="13" viewBox="0 0 13 13"><rect x="0" y="0" width="13" height="13" rx="3" fill="#1565cf"/><path d="M3.2,6.8 L5.6,9 L9.8,4.2" fill="none" stroke="#d5e4f7" stroke-width="1.2"/></svg>
<div class="t s" style="left:575px;top:945px;font-size:12px;color:#111;">显示节点</div>
<svg style="left:644px;top:944px" width="13" height="13" viewBox="0 0 13 13"><rect x="0.5" y="0.5" width="12" height="12" rx="3" fill="#f6f6f6" stroke="#555d66" stroke-width="1"/></svg>
<div class="t s" style="left:661px;top:945px;font-size:12px;color:#111;">显示网格</div>
<svg style="left:483px;top:967px" width="13" height="13" viewBox="0 0 13 13"><rect x="0" y="0" width="13" height="13" rx="3" fill="#1565cf"/><path d="M3.2,6.8 L5.6,9 L9.8,4.2" fill="none" stroke="#d5e4f7" stroke-width="1.2"/></svg>
<div class="t s" style="left:500px;top:968px;font-size:12px;color:#111;">显示载荷</div>
<svg style="left:557px;top:967px" width="13" height="13" viewBox="0 0 13 13"><rect x="0.5" y="0.5" width="12" height="12" rx="3" fill="#f6f6f6" stroke="#555d66" stroke-width="1"/></svg>
<div class="t s" style="left:573px;top:968px;font-size:12px;color:#111;">显示节点号</div>
<svg style="left:644px;top:967px" width="13" height="13" viewBox="0 0 13 13"><rect x="0" y="0" width="13" height="13" rx="3" fill="#1565cf"/><path d="M3.2,6.8 L5.6,9 L9.8,4.2" fill="none" stroke="#d5e4f7" stroke-width="1.2"/></svg>
<div class="t s" style="left:661px;top:968px;font-size:12px;color:#111;">显示云图</div>
<div class="t s" style="left:734px;top:876px;font-size:12px;color:#222;">显示模式:</div>
<div class="r" style="left:732px;top:897px;width:164px;height:20px;background:#fff;border:1px solid #6c7c8e;border-radius:2px"></div>
<div class="t s" style="left:734px;top:902px;font-size:12px;color:#111;">阴影</div>
<svg style="left:881px;top:904px" width="10" height="6" viewBox="0 0 10 6"><path d="M1,1 L5,5 L9,1" fill="none" stroke="#444" stroke-width="1.1"/></svg>
<div class="r" style="left:735px;top:927px;width:76px;height:20px;background:#cde8ef;border:1px solid #1a6fd0;border-radius:3px"></div><div class="t s" style="left:761px;top:932px;font-size:12px;color:#111;">平行</div>
<div class="r" style="left:823px;top:925px;width:76px;height:20px;background:#fafafa;border:1px solid #cdd0d3;border-bottom-color:#b9c0c8;border-radius:4px"></div><div class="t s" style="left:849px;top:930px;font-size:12px;color:#111;">透视</div>
<div class="r" style="left:785px;top:959px;width:76px;height:20px;background:#fafafa;border:1px solid #cdd0d3;border-bottom-color:#b9c0c8;border-radius:4px"></div><div class="t s" style="left:800px;top:964px;font-size:12px;color:#111;">切片观察</div>
<div class="r" style="left:937px;top:889px;width:100px;height:21px;background:#fafafa;border:1px solid #cdd0d3;border-bottom-color:#b9c0c8;border-radius:4px"></div><div class="t s" style="left:952px;top:894px;font-size:12px;color:#111;">复制到剪切板</div>
<div class="r" style="left:937px;top:924px;width:100px;height:21px;background:#fafafa;border:1px solid #cdd0d3;border-bottom-color:#b9c0c8;border-radius:4px"></div><div class="t s" style="left:964px;top:929px;font-size:12px;color:#111;">保存图片</div>
<div class="r" style="left:937px;top:960px;width:100px;height:20px;background:#fafafa;border:1px solid #cdd0d3;border-bottom-color:#b9c0c8;border-radius:4px"></div><div class="t s" style="left:964px;top:964px;font-size:12px;color:#111;">导出模型</div>
<div class="t s" style="left:1612px;top:1014px;font-size:12px;color:#333;">提示：双击标题，关闭子窗体</div>
<svg style="left:1814px;top:1017px" width="9" height="5" viewBox="0 0 9 5"><path d="M0.5,0.5 H8.5 L4.5,4.5 Z" fill="#222"/></svg>
<svg style="left:1834px;top:1010px" width="21" height="21" viewBox="0 0 21 21"><rect width="21" height="21" fill="#f6f6f6"/><ellipse cx="10.5" cy="10.5" rx="9.5" ry="10" fill="#5fcf4f"/><ellipse cx="13" cy="10.5" rx="6" ry="9" fill="#fff"/></svg>
<div class="t s" style="left:1867px;top:1014px;font-size:12px;color:#0000ee;"><u>吊装助理</u></div>
<svg style="left:0;top:0" width="1928" height="1040" viewBox="0 0 1928 1040"><defs><filter id="blur8" x="-20%" y="-20%" width="140%" height="140%"><feGaussianBlur stdDeviation="6"/></filter><filter id="blur3" x="-50%" y="-50%" width="200%" height="200%"><feGaussianBlur stdDeviation="3"/></filter><linearGradient id="wall" x1="860" y1="0" x2="1464" y2="0" gradientUnits="userSpaceOnUse"><stop offset="0" stop-color="#5e6a77"/><stop offset="0.255" stop-color="#5a6572"/><stop offset="0.256" stop-color="#535d6a"/><stop offset="0.42" stop-color="#525c69"/><stop offset="0.43" stop-color="#47505b"/><stop offset="0.615" stop-color="#3a424c"/><stop offset="0.62" stop-color="#2d353e"/><stop offset="1" stop-color="#2c343d"/></linearGradient><linearGradient id="hole" x1="0" y1="0" x2="1" y2="0"><stop offset="0" stop-color="#2c333c"/><stop offset="0.55" stop-color="#323a44"/><stop offset="0.6" stop-color="#58636f"/><stop offset="1" stop-color="#5c6774"/></linearGradient></defs><ellipse cx="1163.0" cy="685.0" rx="304.0" ry="159.0" fill="#d8d9d8" filter="url(#blur8)"/><ellipse cx="1163.0" cy="685.0" rx="299.0" ry="155.0" fill="#c8cac9" filter="url(#blur3)"/><ellipse cx="1433.8" cy="712.3" rx="15" ry="8" fill="#dfe0df" filter="url(#blur3)"/><ellipse cx="1405.4" cy="755.0" rx="15" ry="8" fill="#dfe0df" filter="url(#blur3)"/><ellipse cx="1353.3" cy="791.0" rx="15" ry="8" fill="#dfe0df" filter="url(#blur3)"/><ellipse cx="1282.5" cy="816.8" rx="15" ry="8" fill="#dfe0df" filter="url(#blur3)"/><ellipse cx="1200.1" cy="829.8" rx="15" ry="8" fill="#dfe0df" filter="url(#blur3)"/><ellipse cx="1114.0" cy="828.8" rx="15" ry="8" fill="#dfe0df" filter="url(#blur3)"/><ellipse cx="1032.7" cy="813.9" rx="15" ry="8" fill="#dfe0df" filter="url(#blur3)"/><ellipse cx="964.2" cy="786.5" rx="15" ry="8" fill="#dfe0df" filter="url(#blur3)"/><ellipse cx="915.1" cy="749.3" rx="15" ry="8" fill="#dfe0df" filter="url(#blur3)"/><ellipse cx="890.3" cy="706.0" rx="15" ry="8" fill="#dfe0df" filter="url(#blur3)"/><path d="M861.0,591.0 A301.0,157.0 0 0 0 1463.0,591.0 L1463.0,644.0 A301.0,157.0 0 0 1 861.0,644.0 Z" fill="url(#wall)"/><path d="M861.0,644.0 A301.0,157.0 0 0 0 1463.0,644.0" fill="none" stroke="#7a8796" stroke-width="1"/><ellipse cx="1162.0" cy="591.0" rx="301.0" ry="157.0" fill="#64707d" stroke="#8190a0" stroke-width="2"/><ellipse cx="1432.8" cy="618.3" rx="10.5" ry="5.5" fill="url(#hole)" stroke="#7c8996" stroke-width="1.2"/><ellipse cx="1404.4" cy="661.0" rx="10.5" ry="5.5" fill="url(#hole)" stroke="#7c8996" stroke-width="1.2"/><ellipse cx="1352.3" cy="697.0" rx="10.5" ry="5.5" fill="url(#hole)" stroke="#7c8996" stroke-width="1.2"/><ellipse cx="1281.5" cy="722.8" rx="10.5" ry="5.5" fill="url(#hole)" stroke="#7c8996" stroke-width="1.2"/><ellipse cx="1199.1" cy="735.8" rx="10.5" ry="5.5" fill="url(#hole)" stroke="#7c8996" stroke-width="1.2"/><ellipse cx="1113.0" cy="734.8" rx="10.5" ry="5.5" fill="url(#hole)" stroke="#7c8996" stroke-width="1.2"/><ellipse cx="1031.7" cy="719.9" rx="10.5" ry="5.5" fill="url(#hole)" stroke="#7c8996" stroke-width="1.2"/><ellipse cx="963.2" cy="692.5" rx="10.5" ry="5.5" fill="url(#hole)" stroke="#7c8996" stroke-width="1.2"/><ellipse cx="914.1" cy="655.3" rx="10.5" ry="5.5" fill="url(#hole)" stroke="#7c8996" stroke-width="1.2"/><ellipse cx="889.3" cy="612.0" rx="10.5" ry="5.5" fill="url(#hole)" stroke="#7c8996" stroke-width="1.2"/><ellipse cx="891.2" cy="566.7" rx="10.5" ry="5.5" fill="url(#hole)" stroke="#7c8996" stroke-width="1.2"/><ellipse cx="919.6" cy="524.0" rx="10.5" ry="5.5" fill="url(#hole)" stroke="#7c8996" stroke-width="1.2"/><ellipse cx="971.7" cy="488.0" rx="10.5" ry="5.5" fill="url(#hole)" stroke="#7c8996" stroke-width="1.2"/><ellipse cx="1042.5" cy="462.2" rx="10.5" ry="5.5" fill="url(#hole)" stroke="#7c8996" stroke-width="1.2"/><ellipse cx="1124.9" cy="449.2" rx="10.5" ry="5.5" fill="url(#hole)" stroke="#7c8996" stroke-width="1.2"/><ellipse cx="1211.0" cy="450.2" rx="10.5" ry="5.5" fill="url(#hole)" stroke="#7c8996" stroke-width="1.2"/><ellipse cx="1292.3" cy="465.1" rx="10.5" ry="5.5" fill="url(#hole)" stroke="#7c8996" stroke-width="1.2"/><ellipse cx="1360.8" cy="492.5" rx="10.5" ry="5.5" fill="url(#hole)" stroke="#7c8996" stroke-width="1.2"/><ellipse cx="1409.9" cy="529.7" rx="10.5" ry="5.5" fill="url(#hole)" stroke="#7c8996" stroke-width="1.2"/><ellipse cx="1434.7" cy="573.0" rx="10.5" ry="5.5" fill="url(#hole)" stroke="#7c8996" stroke-width="1.2"/><polygon points="1112.0,645.0 1112.0,551.0 1053.0,521.5 1053.0,615.5" fill="#5b6673" stroke="#7d8a98" stroke-width="1"/><polygon points="1237.1,417.3 1233.7,415.8 1174.7,386.3 1178.1,387.8" fill="#54606d" stroke="#54606d" stroke-width="0.8"/><polygon points="1233.7,415.8 1230.2,414.7 1171.2,385.2 1174.7,386.3" fill="#56616e" stroke="#56616e" stroke-width="0.8"/><polygon points="1230.2,414.7 1226.5,413.8 1167.5,384.3 1171.2,385.2" fill="#57626f" stroke="#57626f" stroke-width="0.8"/><polygon points="1226.5,413.8 1222.8,413.2 1163.8,383.7 1167.5,384.3" fill="#586471" stroke="#586471" stroke-width="0.8"/><polygon points="1222.8,413.2 1218.9,413.0 1159.9,383.5 1163.8,383.7" fill="#596572" stroke="#596572" stroke-width="0.8"/><polygon points="1218.9,413.0 1214.9,413.1 1155.9,383.6 1159.9,383.5" fill="#5b6774" stroke="#5b6774" stroke-width="0.8"/><polygon points="1214.9,413.1 1210.8,413.5 1151.8,384.0 1155.9,383.6" fill="#5c6875" stroke="#5c6875" stroke-width="0.8"/><polygon points="1210.8,413.5 1206.6,414.2 1147.6,384.7 1151.8,384.0" fill="#5e6a77" stroke="#5e6a77" stroke-width="0.8"/><polygon points="1206.6,414.2 1202.4,415.3 1143.4,385.8 1147.6,384.7" fill="#606c79" stroke="#606c79" stroke-width="0.8"/><polygon points="1202.4,415.3 1198.2,416.6 1139.2,387.1 1143.4,385.8" fill="#616e7b" stroke="#616e7b" stroke-width="0.8"/><polygon points="1198.2,416.6 1193.9,418.3 1134.9,388.8 1139.2,387.1" fill="#63707d" stroke="#63707d" stroke-width="0.8"/><polygon points="1193.9,418.3 1189.5,420.2 1130.5,390.7 1134.9,388.8" fill="#65727f" stroke="#65727f" stroke-width="0.8"/><polygon points="1189.5,420.2 1185.2,422.5 1126.2,393.0 1130.5,390.7" fill="#677481" stroke="#677481" stroke-width="0.8"/><polygon points="1185.2,422.5 1180.9,425.0 1121.9,395.5 1126.2,393.0" fill="#697683" stroke="#697683" stroke-width="0.8"/><polygon points="1180.9,425.0 1176.6,427.9 1117.6,398.4 1121.9,395.5" fill="#6a7784" stroke="#6a7784" stroke-width="0.8"/><polygon points="1176.6,427.9 1172.4,431.0 1113.4,401.5 1117.6,398.4" fill="#6c7986" stroke="#6c7986" stroke-width="0.8"/><polygon points="1172.4,431.0 1168.2,434.3 1109.2,404.8 1113.4,401.5" fill="#6d7a87" stroke="#6d7a87" stroke-width="0.8"/><polygon points="1168.2,434.3 1164.0,437.9 1105.0,408.4 1109.2,404.8" fill="#6e7b88" stroke="#6e7b88" stroke-width="0.8"/><polygon points="1164.0,437.9 1160.0,441.8 1101.0,412.3 1105.0,408.4" fill="#6f7c89" stroke="#6f7c89" stroke-width="0.8"/><polygon points="1160.0,441.8 1156.0,445.9 1097.0,416.4 1101.0,412.3" fill="#717e8b" stroke="#717e8b" stroke-width="0.8"/><polygon points="1156.0,445.9 1152.2,450.1 1093.2,420.6 1097.0,416.4" fill="#727f8c" stroke="#727f8c" stroke-width="0.8"/><polygon points="1152.2,450.1 1148.4,454.6 1089.4,425.1 1093.2,420.6" fill="#73808d" stroke="#73808d" stroke-width="0.8"/><polygon points="1148.4,454.6 1144.8,459.3 1085.8,429.8 1089.4,425.1" fill="#74818e" stroke="#74818e" stroke-width="0.8"/><polygon points="1144.8,459.3 1141.3,464.2 1082.3,434.7 1085.8,429.8" fill="#75828f" stroke="#75828f" stroke-width="0.8"/><polygon points="1141.3,464.2 1138.0,469.2 1079.0,439.7 1082.3,434.7" fill="#768390" stroke="#768390" stroke-width="0.8"/><polygon points="1138.0,469.2 1134.8,474.3 1075.8,444.8 1079.0,439.7" fill="#778491" stroke="#778491" stroke-width="0.8"/><polygon points="1134.8,474.3 1131.8,479.6 1072.8,450.1 1075.8,444.8" fill="#778491" stroke="#778491" stroke-width="0.8"/><polygon points="1131.8,479.6 1129.0,484.9 1070.0,455.4 1072.8,450.1" fill="#788592" stroke="#788592" stroke-width="0.8"/><polygon points="1129.0,484.9 1126.4,490.4 1067.4,460.9 1070.0,455.4" fill="#798693" stroke="#798693" stroke-width="0.8"/><polygon points="1126.4,490.4 1123.9,495.9 1064.9,466.4 1067.4,460.9" fill="#798693" stroke="#798693" stroke-width="0.8"/><polygon points="1123.9,495.9 1121.7,501.5 1062.7,472.0 1064.9,466.4" fill="#788592" stroke="#788592" stroke-width="0.8"/><polygon points="1121.7,501.5 1119.7,507.1 1060.7,477.6 1062.7,472.0" fill="#778390" stroke="#778390" stroke-width="0.8"/><polygon points="1119.7,507.1 1117.9,512.7 1058.9,483.2 1060.7,477.6" fill="#75828f" stroke="#75828f" stroke-width="0.8"/><polygon points="1117.9,512.7 1116.4,518.3 1057.4,488.8 1058.9,483.2" fill="#74808d" stroke="#74808d" stroke-width="0.8"/><polygon points="1116.4,518.3 1115.0,523.9 1056.0,494.4 1057.4,488.8" fill="#737f8c" stroke="#737f8c" stroke-width="0.8"/><polygon points="1115.0,523.9 1114.0,529.5 1055.0,500.0 1056.0,494.4" fill="#717d8a" stroke="#717d8a" stroke-width="0.8"/><polygon points="1114.0,529.5 1113.1,535.0 1054.1,505.5 1055.0,500.0" fill="#6f7b88" stroke="#6f7b88" stroke-width="0.8"/><polygon points="1113.1,535.0 1112.5,540.4 1053.5,510.9 1054.1,505.5" fill="#6d7986" stroke="#6d7986" stroke-width="0.8"/><polygon points="1112.5,540.4 1112.1,545.8 1053.1,516.3 1053.5,510.9" fill="#6b7784" stroke="#6b7784" stroke-width="0.8"/><polygon points="1112.1,545.8 1112.0,551.0 1053.0,521.5 1053.1,516.3" fill="#697582" stroke="#697582" stroke-width="0.8"/><path d="M1178.1,387.8 L1174.7,386.3 L1171.2,385.2 L1167.5,384.3 L1163.8,383.7 L1159.9,383.5 L1155.9,383.6 L1151.8,384.0 L1147.6,384.7 L1143.4,385.8 L1139.2,387.1 L1134.9,388.8 L1130.5,390.7 L1126.2,393.0 L1121.9,395.5 L1117.6,398.4 L1113.4,401.5 L1109.2,404.8 L1105.0,408.4 L1101.0,412.3 L1097.0,416.4 L1093.2,420.6 L1089.4,425.1 L1085.8,429.8 L1082.3,434.7 L1079.0,439.7 L1075.8,444.8 L1072.8,450.1 L1070.0,455.4 L1067.4,460.9 L1064.9,466.4 L1062.7,472.0 L1060.7,477.6 L1058.9,483.2 L1057.4,488.8 L1056.0,494.4 L1055.0,500.0 L1054.1,505.5 L1053.5,510.9 L1053.1,516.3 L1053.0,521.5" fill="none" stroke="#7d8a98" stroke-width="1"/><path d="M1112.0,645.0 L1264.0,567.0 L1264.0,473.0 L1263.9,468.3 L1263.6,463.7 L1263.1,459.2 L1262.3,454.9 L1261.4,450.8 L1260.3,446.8 L1259.0,443.0 L1257.4,439.4 L1255.7,435.9 L1253.8,432.7 L1251.7,429.7 L1249.5,427.0 L1247.1,424.4 L1244.5,422.1 L1241.7,420.1 L1238.9,418.3 L1235.8,416.7 L1232.7,415.5 L1229.4,414.4 L1226.0,413.7 L1222.5,413.2 L1218.9,413.0 L1215.2,413.1 L1211.5,413.4 L1207.7,414.0 L1203.8,414.9 L1199.9,416.0 L1195.9,417.4 L1192.0,419.1 L1188.0,421.0 L1184.0,423.2 L1180.1,425.6 L1176.1,428.2 L1172.2,431.1 L1168.3,434.2 L1164.5,437.5 L1160.8,441.0 L1157.1,444.7 L1153.5,448.6 L1150.0,452.7 L1146.6,456.9 L1143.3,461.3 L1140.2,465.8 L1137.1,470.5 L1134.3,475.2 L1131.5,480.1 L1128.9,485.0 L1126.5,490.1 L1124.3,495.1 L1122.2,500.3 L1120.3,505.4 L1118.6,510.6 L1117.0,515.8 L1115.7,521.0 L1114.6,526.1 L1113.7,531.2 L1112.9,536.3 L1112.4,541.3 L1112.1,546.2 L1112.0,551.0 Z" fill="#2c333c" stroke="#7f8c9a" stroke-width="1.2" stroke-linejoin="round"/><path d="M1213.1,499.1 L1212.9,496.1 L1212.5,493.2 L1211.9,490.5 L1210.9,488.0 L1209.7,485.8 L1208.3,483.9 L1206.6,482.3 L1204.8,481.1 L1202.7,480.1 L1200.5,479.6 L1198.2,479.3 L1195.8,479.5 L1193.2,480.0 L1190.6,480.8 L1188.0,482.0 L1185.4,483.5 L1182.8,485.3 L1180.2,487.4 L1177.8,489.8 L1175.5,492.4 L1173.3,495.3 L1171.2,498.3 L1169.4,501.5 L1167.7,504.8 L1166.3,508.1 L1165.1,511.5 L1164.1,515.0 L1163.5,518.3 L1163.1,521.7 L1162.9,524.9 L1163.1,527.9 L1163.5,530.8 L1164.1,533.5 L1165.1,536.0 L1166.3,538.2 L1167.7,540.1 L1169.4,541.7 L1171.2,542.9 L1173.3,543.9 L1175.5,544.4 L1177.8,544.7 L1180.2,544.5 L1182.8,544.0 L1185.4,543.2 L1188.0,542.0 L1190.6,540.5 L1193.2,538.7 L1195.8,536.6 L1198.2,534.2 L1200.5,531.6 L1202.7,528.7 L1204.8,525.7 L1206.6,522.5 L1208.3,519.2 L1209.7,515.9 L1210.9,512.5 L1211.9,509.0 L1212.5,505.7 L1212.9,502.3 L1213.1,499.1 Z" fill="#6f7b88" stroke="#8391a0" stroke-width="1"/><clipPath id="hclip"><path d="M1213.1,499.1 L1212.9,496.1 L1212.5,493.2 L1211.9,490.5 L1210.9,488.0 L1209.7,485.8 L1208.3,483.9 L1206.6,482.3 L1204.8,481.1 L1202.7,480.1 L1200.5,479.6 L1198.2,479.3 L1195.8,479.5 L1193.2,480.0 L1190.6,480.8 L1188.0,482.0 L1185.4,483.5 L1182.8,485.3 L1180.2,487.4 L1177.8,489.8 L1175.5,492.4 L1173.3,495.3 L1171.2,498.3 L1169.4,501.5 L1167.7,504.8 L1166.3,508.1 L1165.1,511.5 L1164.1,515.0 L1163.5,518.3 L1163.1,521.7 L1162.9,524.9 L1163.1,527.9 L1163.5,530.8 L1164.1,533.5 L1165.1,536.0 L1166.3,538.2 L1167.7,540.1 L1169.4,541.7 L1171.2,542.9 L1173.3,543.9 L1175.5,544.4 L1177.8,544.7 L1180.2,544.5 L1182.8,544.0 L1185.4,543.2 L1188.0,542.0 L1190.6,540.5 L1193.2,538.7 L1195.8,536.6 L1198.2,534.2 L1200.5,531.6 L1202.7,528.7 L1204.8,525.7 L1206.6,522.5 L1208.3,519.2 L1209.7,515.9 L1210.9,512.5 L1211.9,509.0 L1212.5,505.7 L1212.9,502.3 L1213.1,499.1 Z"/></clipPath><path clip-path="url(#hclip)" d="M1213.1,499.1 L1212.7,494.1 L1211.6,489.6 L1209.7,485.8 L1207.2,482.8 L1204.1,480.7 L1200.5,479.6 L1196.6,479.4 L1192.4,480.2 L1188.0,482.0 L1183.6,484.7 L1179.4,488.2 L1175.5,492.4 L1171.9,497.3 L1168.8,502.6 L1167.8,510.6 L1170.9,505.3 L1174.5,500.4 L1178.4,496.2 L1182.6,492.7 L1187.0,490.0 L1191.4,488.2 L1195.6,487.4 L1199.5,487.6 L1203.1,488.7 L1206.2,490.8 L1208.7,493.8 L1210.6,497.6 L1211.7,502.1 L1212.1,507.1 Z" fill="#56616d"/><path clip-path="url(#hclip)" d="M1212.1,507.1 L1211.7,502.1 L1210.6,497.6 L1208.7,493.8 L1206.2,490.8 L1203.1,488.7 L1199.5,487.6 L1195.6,487.4 L1191.4,488.2 L1187.0,490.0 L1182.6,492.7 L1178.4,496.2 L1174.5,500.4 L1170.9,505.3 L1167.8,510.6" fill="none" stroke="#8896a4" stroke-width="1"/><path d="M1213.1,499.1 L1212.9,496.1 L1212.5,493.2 L1211.9,490.5 L1210.9,488.0 L1209.7,485.8 L1208.3,483.9 L1206.6,482.3 L1204.8,481.1 L1202.7,480.1 L1200.5,479.6 L1198.2,479.3 L1195.8,479.5 L1193.2,480.0 L1190.6,480.8 L1188.0,482.0 L1185.4,483.5 L1182.8,485.3 L1180.2,487.4 L1177.8,489.8 L1175.5,492.4 L1173.3,495.3 L1171.2,498.3 L1169.4,501.5 L1167.7,504.8 L1166.3,508.1 L1165.1,511.5 L1164.1,515.0 L1163.5,518.3 L1163.1,521.7 L1162.9,524.9 L1163.1,527.9 L1163.5,530.8 L1164.1,533.5 L1165.1,536.0 L1166.3,538.2 L1167.7,540.1 L1169.4,541.7 L1171.2,542.9 L1173.3,543.9 L1175.5,544.4 L1177.8,544.7 L1180.2,544.5 L1182.8,544.0 L1185.4,543.2 L1188.0,542.0 L1190.6,540.5 L1193.2,538.7 L1195.8,536.6 L1198.2,534.2 L1200.5,531.6 L1202.7,528.7 L1204.8,525.7 L1206.6,522.5 L1208.3,519.2 L1209.7,515.9 L1210.9,512.5 L1211.9,509.0 L1212.5,505.7 L1212.9,502.3 L1213.1,499.1 Z" fill="none" stroke="#8391a0" stroke-width="1.2"/><circle cx="1158.5" cy="497" r="10" fill="#fff" stroke="#444" stroke-width="0.8"/><path d="M1158.5,489 Q1160,489 1167,500 Q1158.5,504 1150,500 Q1157,489 1158.5,489 Z" fill="#000"/><text x="1165.5" y="483" font-family="Liberation Mono, monospace" font-size="11" font-weight="bold" fill="#fff" stroke="#1a1a1a" stroke-width="2.2" paint-order="stroke">(0,0)</text></svg></body></html>
